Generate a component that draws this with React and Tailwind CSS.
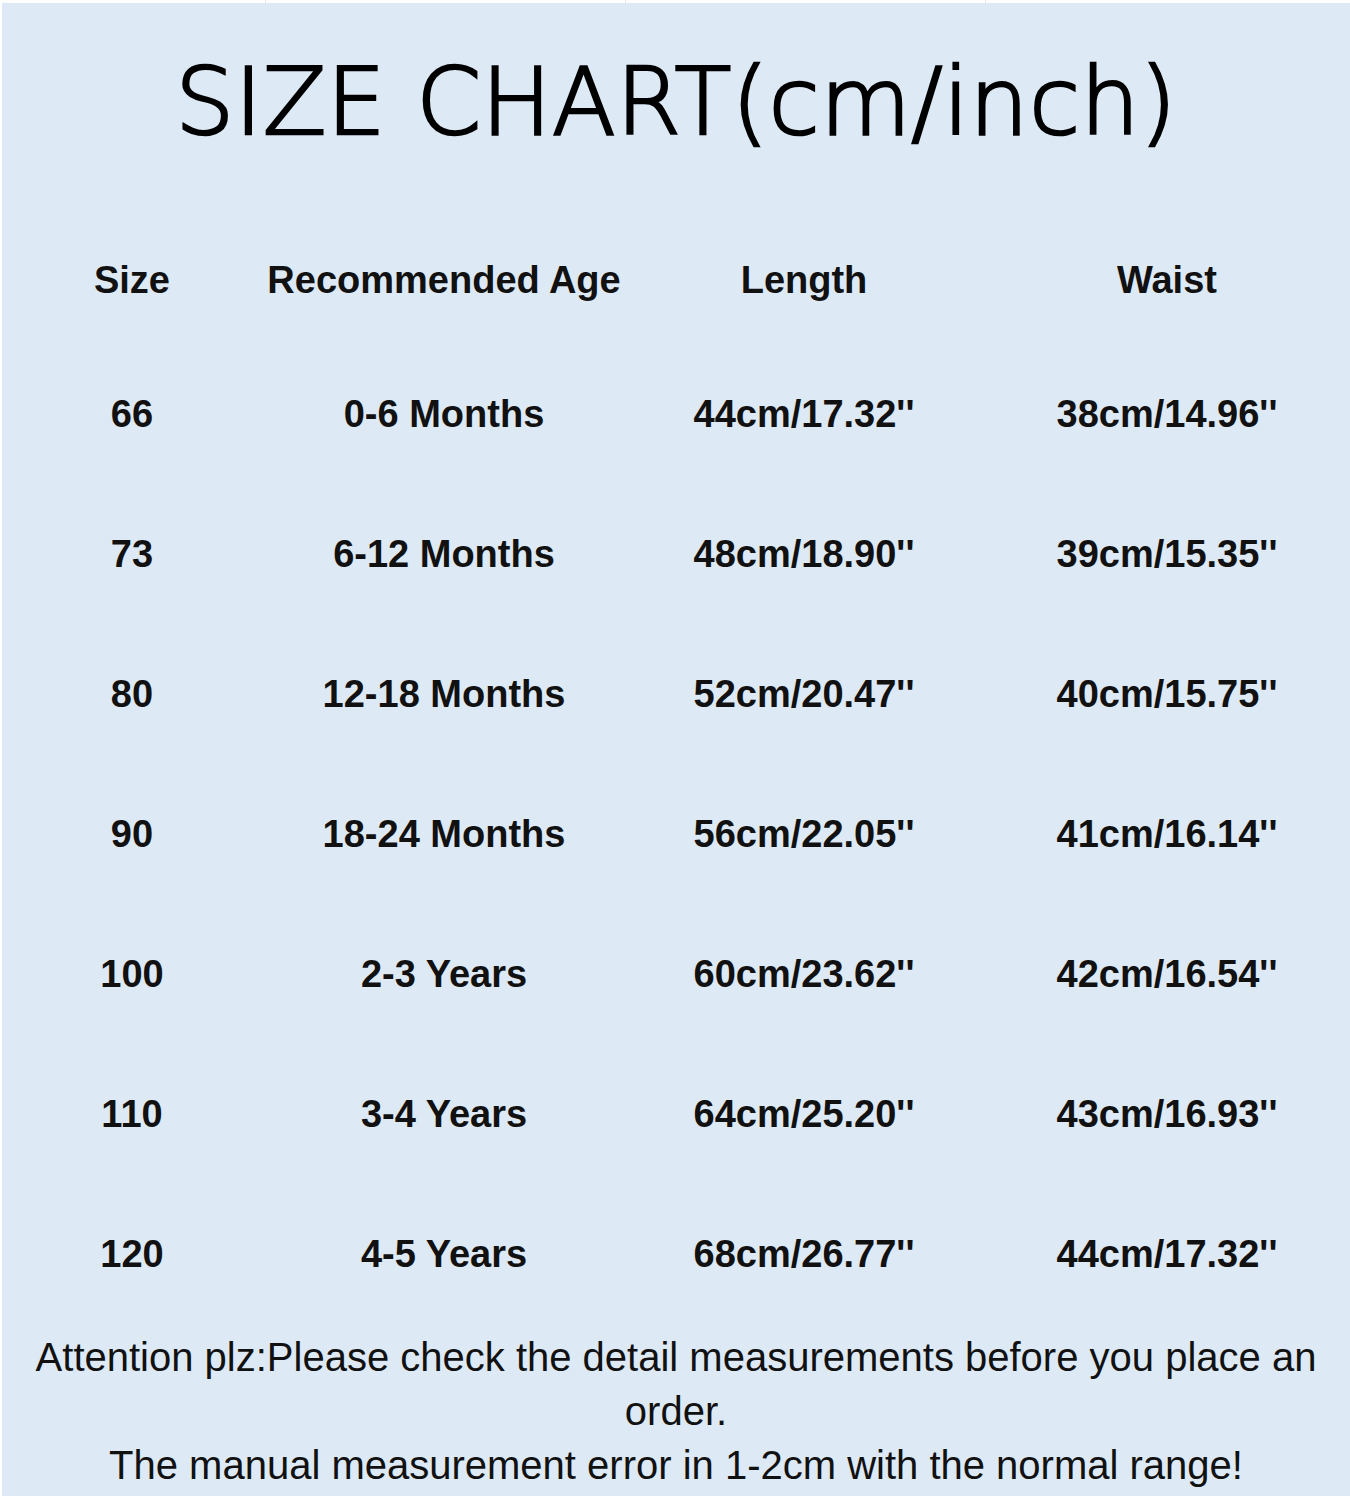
import React from 'react';

const rows = [
    ['66', '0-6 Months', "44cm/17.32''", "38cm/14.96''"],
    ['73', '6-12 Months', "48cm/18.90''", "39cm/15.35''"],
    ['80', '12-18 Months', "52cm/20.47''", "40cm/15.75''"],
    ['90', '18-24 Months', "56cm/22.05''", "41cm/16.14''"],
    ['100', '2-3 Years', "60cm/23.62''", "42cm/16.54''"],
    ['110', '3-4 Years', "64cm/25.20''", "43cm/16.93''"],
    ['120', '4-5 Years', "68cm/26.77''", "44cm/17.32''"],
];

const cols = 'grid grid-cols-[264px_360px_360px_1fr]';

const Cell = ({children}) => (
    <div className="flex items-center justify-center whitespace-nowrap">{children}</div>
);

const App = () => {
    return (
        <div className="w-[1350px] h-[1500px] bg-white flex flex-col">
            {/* thin white strip on top, with faint cell borders */}
            <div className={`${cols} h-[3px] shrink-0 pl-[2px]`}>
                <div className="border-r border-[#e4e8ee]"/>
                <div className="border-r border-[#e4e8ee]"/>
                <div className="border-r border-[#e4e8ee]"/>
                <div/>
            </div>

            <div className="ml-[2px] h-[1493px] bg-[#dde9f5] flex flex-col text-[#111]">
                <div className="h-[213px] flex justify-center pt-[39px]">
                    <h1 className="text-[93px] leading-[120px] font-extralight tracking-[0.5px] text-black [-webkit-text-stroke:2.5px_black]"
                        style={{fontFamily: '"DejaVu Sans", sans-serif'}}>
                        SIZE CHART(cm/inch)
                    </h1>
                </div>

                <div className="font-bold text-[38px]" style={{fontFamily: '"Liberation Sans", Arial, sans-serif'}}>
                    <div className={`${cols} h-[128px] -ml-[2px]`}>
                        <Cell>Size</Cell>
                        <Cell>Recommended Age</Cell>
                        <Cell>Length</Cell>
                        <Cell>Waist</Cell>
                    </div>
                    {rows.map((r) => (
                        <div key={r[0]} className={`${cols} h-[140px] -ml-[2px]`}>
                            {r.map((v, i) => (
                                <Cell key={i}>{v}</Cell>
                            ))}
                        </div>
                    ))}
                </div>

                <div className="pt-[6px] text-center text-[40px] leading-[54px]"
                     style={{fontFamily: '"Liberation Sans", Arial, sans-serif'}}>
                    <div className="whitespace-nowrap">Attention plz:Please check the detail measurements before you place an</div>
                    <div>order.</div>
                    <div className="whitespace-nowrap">The manual measurement error in 1-2cm with the normal range!</div>
                </div>
            </div>
        </div>
    );
};

export default App;
